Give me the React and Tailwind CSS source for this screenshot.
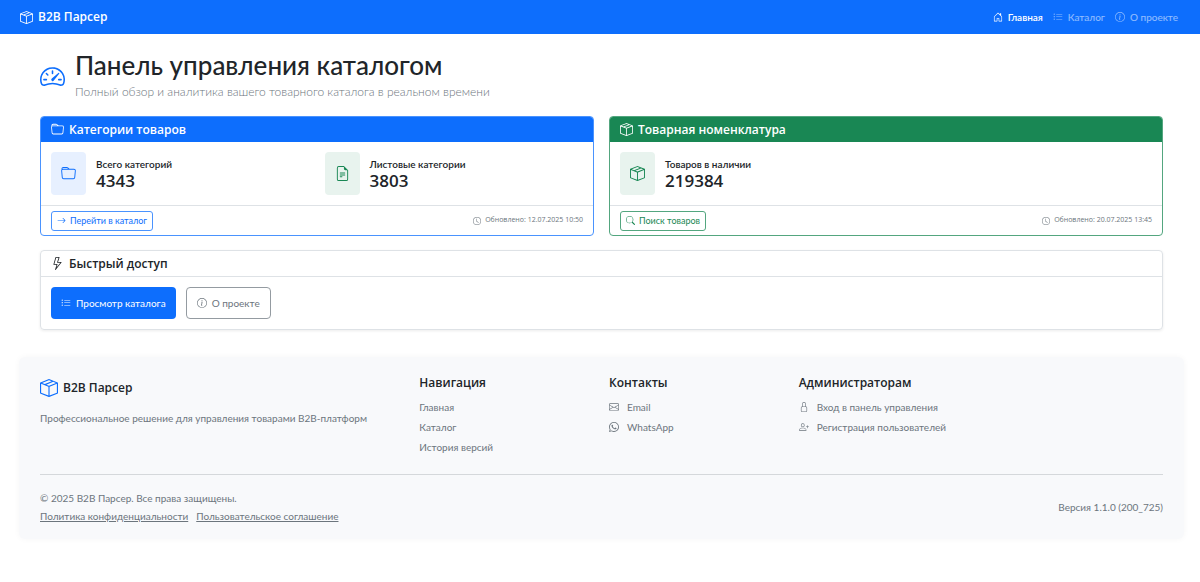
import React from 'react';
import {
  BsArrowRight,
  BsBoxSeam,
  BsClock,
  BsEnvelope,
  BsFileEarmarkText,
  BsFolder,
  BsHouseDoor,
  BsInfoCircle,
  BsLightning,
  BsListUl,
  BsLock,
  BsPersonPlus,
  BsSearch,
  BsSpeedometer2,
  BsWhatsapp,
} from 'react-icons/bs';

const Navbar = () => (
  <nav className="flex h-[34px] items-center justify-between bg-[#0d6efd] pl-5 pr-[22px] text-white">
    <a href="#" className="flex items-center gap-[5px] font-['Open_Sans',sans-serif] text-[12px] font-semibold">
      <BsBoxSeam size={13} />
      B2B Парсер
    </a>
    <ul className="flex items-center gap-[10px] text-[10px]">
      <li>
        <a href="#" className="flex items-center gap-[5px] font-semibold">
          <BsHouseDoor size={10} />
          Главная
        </a>
      </li>
      <li>
        <a href="#" className="flex items-center gap-[5px] text-white/55">
          <BsListUl size={10} />
          Каталог
        </a>
      </li>
      <li>
        <a href="#" className="flex items-center gap-[5px] text-white/55">
          <BsInfoCircle size={10} />
          О проекте
        </a>
      </li>
    </ul>
  </nav>
);

const Stat = ({ icon: Icon, color, label, value }) => (
  <div className="flex items-center gap-[10px]">
    <div className={`flex h-[43px] w-[35px] shrink-0 items-center justify-center rounded-[4px] ${color}`}>
      <Icon size={15} />
    </div>
    <div>
      <h3 className="text-[10px] leading-[14px] font-semibold">{label}</h3>
      <p className="font-['Open_Sans',sans-serif] text-[17px] leading-[20px] font-semibold">{value}</p>
    </div>
  </div>
);

const StatCard = ({ icon: Icon, title, border, header, button, action, actionIcon: ActionIcon, updated, children }) => (
  <section className={`overflow-hidden rounded-[4px] border bg-white ${border}`}>
    <h2 className={`flex h-[25px] items-center gap-[5px] px-[10px] font-['Open_Sans',sans-serif] text-[12px] font-semibold text-white ${header}`}>
      <Icon size={13} />
      {title}
    </h2>
    <div className="grid grid-cols-2 gap-[15px] p-[10px]">{children}</div>
    <div className="flex h-[30px] items-center justify-between border-t border-[#dee2e6] px-[10px]">
      <button className={`flex h-5 items-center gap-1 rounded-[3px] border px-[5px] text-[9px] ${button}`}>
        <ActionIcon size={9} />
        {action}
      </button>
      <span className="flex items-center gap-1 font-['Open_Sans',sans-serif] text-[7px] text-[#6c757d]">
        <BsClock size={8} />
        {updated}
      </span>
    </div>
  </section>
);

const FooterColumn = ({ title, className, children }) => (
  <div className={className}>
    <h3 className="font-['Open_Sans',sans-serif] text-[12px] leading-[16px] font-semibold text-[#212529]">{title}</h3>
    <ul className="mt-[6px] text-[10px] leading-5">{children}</ul>
  </div>
);

const FooterLink = ({ icon: Icon, children }) => (
  <li>
    <a href="#" className="flex items-center gap-2">
      {Icon && <Icon size={10} />}
      {children}
    </a>
  </li>
);

const Footer = () => (
  <footer className="mt-[27px] ml-[19px] mr-4 rounded-[6px] bg-[#f8f9fb] pt-[18px] pr-[21px] pb-[14px] pl-[21px] text-[10px] text-[#6c757d] shadow-[0_0_6px_rgba(0,0,0,0.04)]">
    <div className="grid grid-cols-6 gap-x-[15px]">
      <div className="col-span-2">
        <a href="#" className="mt-1 flex items-center gap-[5px] font-['Open_Sans',sans-serif] text-[12px] leading-[18px] font-semibold text-[#212529]">
          <BsBoxSeam size={18} className="text-[#0d6efd]" />
          B2B Парсер
        </a>
        <p className="mt-[11px] leading-5">Профессиональное решение для управления товарами B2B-платформ</p>
      </div>
      <FooterColumn title="Навигация">
        <FooterLink>Главная</FooterLink>
        <FooterLink>Каталог</FooterLink>
        <FooterLink>История версий</FooterLink>
      </FooterColumn>
      <FooterColumn title="Контакты">
        <FooterLink icon={BsEnvelope}>Email</FooterLink>
        <FooterLink icon={BsWhatsapp}>WhatsApp</FooterLink>
      </FooterColumn>
      <FooterColumn title="Администраторам" className="col-span-2">
        <FooterLink icon={BsLock}>Вход в панель управления</FooterLink>
        <FooterLink icon={BsPersonPlus}>Регистрация пользователей</FooterLink>
      </FooterColumn>
    </div>
    <div className="mt-[17px] flex items-center justify-between border-t border-[#d5d8db] pt-[14px]">
      <div className="leading-[18px]">
        <p>© 2025 B2B Парсер. Все права защищены.</p>
        <p className="flex gap-2">
          <a href="#" className="underline">Политика конфиденциальности</a>
          <a href="#" className="underline">Пользовательское соглашение</a>
        </p>
      </div>
      <span>Версия 1.1.0 (200_725)</span>
    </div>
  </footer>
);

const App = () => {
  return (
    <div className="min-h-screen bg-white font-['Lato','Open_Sans',sans-serif] text-[#212529]">
      <Navbar />
      <main className="pt-[13px] pr-[37px] pl-10">
        <header className="flex items-center gap-[10px]">
          <BsSpeedometer2 size={25} className="mt-1 text-[#0d6efd]" />
          <div>
            <h1 className="text-[26px] leading-[36px] font-medium">Панель управления каталогом</h1>
            <p className="text-[12px] leading-[18px] font-light text-[#6c757d]">
              Полный обзор и аналитика вашего товарного каталога в реальном времени
            </p>
          </div>
        </header>

        <div className="mt-[15px] grid grid-cols-2 gap-[15px]">
          <StatCard
            icon={BsFolder}
            title="Категории товаров"
            border="border-[#4a93fe]"
            header="bg-[#0d6efd]"
            button="border-[#4a93fe] text-[#0d6efd]"
            action="Перейти в каталог"
            actionIcon={BsArrowRight}
            updated="Обновлено: 12.07.2025 10:50"
          >
            <Stat icon={BsFolder} color="bg-[#e7f0ff] text-[#0d6efd]" label="Всего категорий" value="4343" />
            <Stat icon={BsFileEarmarkText} color="bg-[#e8f3ee] text-[#198754]" label="Листовые категории" value="3803" />
          </StatCard>
          <StatCard
            icon={BsBoxSeam}
            title="Товарная номенклатура"
            border="border-[#53a67f]"
            header="bg-[#198754]"
            button="border-[#53a67f] text-[#198754]"
            action="Поиск товаров"
            actionIcon={BsSearch}
            updated="Обновлено: 20.07.2025 13:45"
          >
            <Stat icon={BsBoxSeam} color="bg-[#e8f3ee] text-[#198754]" label="Товаров в наличии" value="219384" />
          </StatCard>
        </div>

        <section className="mt-[14px] rounded-[4px] border border-[#dee2e6] shadow-[0_1px_3px_rgba(0,0,0,0.08)]">
          <h2 className="flex h-[26px] items-center gap-[5px] border-b border-[#dee2e6] px-[10px] font-['Open_Sans',sans-serif] text-[12px] font-semibold">
            <BsLightning size={13} />
            Быстрый доступ
          </h2>
          <div className="flex gap-[10px] p-[10px]">
            <button className="flex h-8 items-center gap-[5px] rounded-[4px] bg-[#0d6efd] px-[10px] text-[10px] text-white">
              <BsListUl size={10} />
              Просмотр каталога
            </button>
            <button className="flex h-8 items-center gap-[5px] rounded-[4px] border border-[#949ba1] px-[10px] text-[10px] text-[#6c757d]">
              <BsInfoCircle size={10} />
              О проекте
            </button>
          </div>
        </section>
      </main>
      <Footer />
    </div>
  );
};

export default App;
